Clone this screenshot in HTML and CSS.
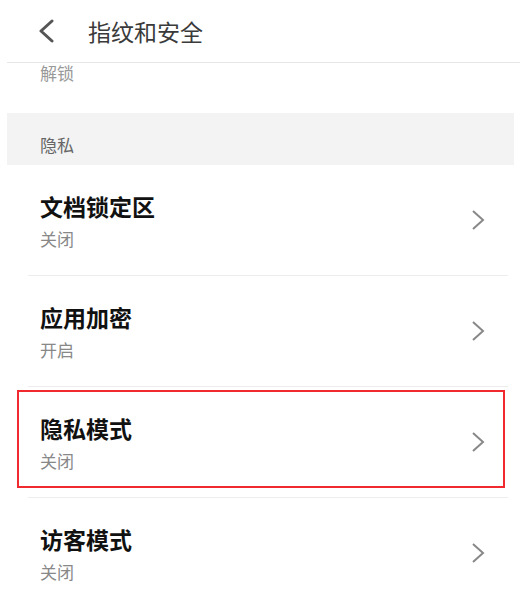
FILE: index.html
```html
<!DOCTYPE html>
<html lang="zh-CN">

<head>
  <meta charset="UTF-8">
  <meta name="viewport" content="width=device-width, initial-scale=1.0">
  <title>指纹和安全</title>
  <link rel="stylesheet" href="styles.css">
</head>

<body>

  <!-- Top bar -->
  <div class="topbar">
    <svg class="back" width="18" height="24" viewBox="0 0 18 24">
      <polyline points="14,2 3,12 14,22" fill="none" stroke="#555" stroke-width="3" stroke-linecap="round" stroke-linejoin="round" />
    </svg>
    <h1>指纹和安全</h1>
  </div>

  <!-- Tail of the previous item -->
  <div class="prev-tail">解锁</div>

  <!-- Section header -->
  <div class="section-title">隐私</div>

  <!-- Privacy items -->
  <div class="list">
    <div class="item">
      <div class="item-text">
        <h3>文档锁定区</h3>
        <p>关闭</p>
      </div>
      <svg class="chevron" width="14" height="22" viewBox="0 0 14 22">
        <polyline points="2,2 12,11 2,20" fill="none" stroke="#888" stroke-width="2" />
      </svg>
    </div>
    <div class="item">
      <div class="item-text">
        <h3>应用加密</h3>
        <p>开启</p>
      </div>
      <svg class="chevron" width="14" height="22" viewBox="0 0 14 22">
        <polyline points="2,2 12,11 2,20" fill="none" stroke="#888" stroke-width="2" />
      </svg>
    </div>
    <div class="item marked">
      <div class="item-text">
        <h3>隐私模式</h3>
        <p>关闭</p>
      </div>
      <svg class="chevron" width="14" height="22" viewBox="0 0 14 22">
        <polyline points="2,2 12,11 2,20" fill="none" stroke="#888" stroke-width="2" />
      </svg>
    </div>
    <div class="item">
      <div class="item-text">
        <h3>访客模式</h3>
        <p>关闭</p>
      </div>
      <svg class="chevron" width="14" height="22" viewBox="0 0 14 22">
        <polyline points="2,2 12,11 2,20" fill="none" stroke="#888" stroke-width="2" />
      </svg>
    </div>
  </div>

</body>

</html>
```

FILE: styles.css
```css
body {
  font-family: "Noto Sans CJK SC", "Noto Sans", sans-serif;
  margin: 0;
  padding: 0;
  background: white;
  width: 520px;
  height: 596px;
  overflow: hidden;
}

/* Top bar */
.topbar {
  display: flex;
  align-items: center;
  height: 62px;
  margin-left: 7px;
  padding-left: 31px;
  border-bottom: 1px solid #e6e6e6;
}

.topbar .back {
  margin-right: 32px;
}

.topbar h1 {
  margin: 0;
  font-size: 23px;
  font-weight: normal;
  color: #3a3a3a;
}

/* Previous item tail */
.prev-tail {
  height: 50px;
  padding-left: 40px;
  font-size: 17px;
  line-height: 20px;
  color: #999;
}

/* Section header */
.section-title {
  box-sizing: border-box;
  height: 52px;
  margin: 0 6px 0 7px;
  padding: 20px 0 0 33px;
  background: #f3f3f3;
  font-size: 17px;
  line-height: 24px;
  color: #666;
}

/* Items */
.list {
  margin: 0 12px 0 28px;
}

.item {
  box-sizing: border-box;
  height: 111px;
  display: flex;
  align-items: center;
  justify-content: space-between;
  padding: 0 23px 0 12px;
  border-bottom: 1px solid #ededed;
}

.item-text h3 {
  margin: 0;
  font-size: 23px;
  line-height: 30px;
  font-weight: bold;
  color: #111;
}

.item-text p {
  margin: 7px 0 0;
  font-size: 17px;
  line-height: 22px;
  color: #888;
}

/* Red annotation box */
.item.marked {
  position: relative;
}

.item.marked::after {
  content: "";
  position: absolute;
  top: 3px;
  bottom: 9px;
  left: -11px;
  right: 3px;
  border: 2px solid #f02a2e;
}
```
